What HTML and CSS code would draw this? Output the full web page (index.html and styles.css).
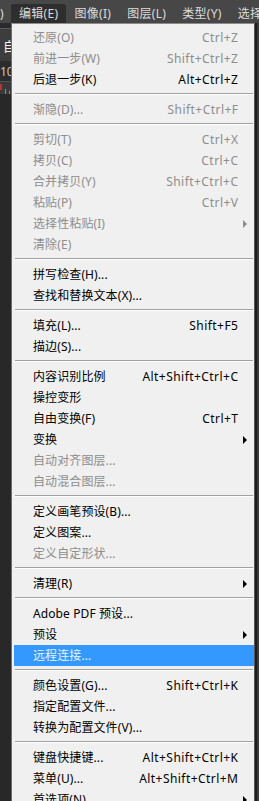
FILE: index.html
```html
<!DOCTYPE html>
<html lang="zh-CN">
<head>
<meta charset="utf-8">
<title>编辑菜单</title>
<link rel="stylesheet" href="styles.css">
</head>
<body>
<div class="app">
  <div class="menubar">
    <span class="mb-item mb-cut">)</span>
    <span class="mb-item mb-active">编辑(E)</span>
    <span class="mb-item">图像(I)</span>
    <span class="mb-item">图层(L)</span>
    <span class="mb-item">类型(Y)</span>
    <span class="mb-item">选择</span>
  </div>
  <div class="main">
    <div class="left-strip">
      <div class="ls-top"></div>
      <div class="ls-line"></div>
      <div class="ls-tool"><span class="ls-char">自</span></div>
      <div class="ls-num"><span class="ls-numtext">10</span></div>
      <div class="ls-ruler"><span class="ls-red"></span><span class="ls-tick"></span><span class="ls-tick t2"></span></div>
      <div class="ls-rest"></div>
    </div>
    <div class="menu">
      <div class="item disabled"><span class="label">还原(O)</span><span class="key">Ctrl+Z</span><span class="sub"></span></div>
      <div class="item disabled"><span class="label">前进一步(W)</span><span class="key">Shift+Ctrl+Z</span><span class="sub"></span></div>
      <div class="item"><span class="label">后退一步(K)</span><span class="key">Alt+Ctrl+Z</span><span class="sub"></span></div>
      <div class="sep"></div>
      <div class="item disabled"><span class="label">渐隐(D)...</span><span class="key">Shift+Ctrl+F</span><span class="sub"></span></div>
      <div class="sep"></div>
      <div class="item disabled"><span class="label">剪切(T)</span><span class="key">Ctrl+X</span><span class="sub"></span></div>
      <div class="item disabled"><span class="label">拷贝(C)</span><span class="key">Ctrl+C</span><span class="sub"></span></div>
      <div class="item disabled"><span class="label">合并拷贝(Y)</span><span class="key">Shift+Ctrl+C</span><span class="sub"></span></div>
      <div class="item disabled"><span class="label">粘贴(P)</span><span class="key">Ctrl+V</span><span class="sub"></span></div>
      <div class="item disabled"><span class="label">选择性粘贴(I)</span><span class="key"></span><span class="sub"><i class="arrow arrow-dis"></i></span></div>
      <div class="item disabled"><span class="label">清除(E)</span><span class="key"></span><span class="sub"></span></div>
      <div class="sep"></div>
      <div class="item"><span class="label">拼写检查(H)...</span><span class="key"></span><span class="sub"></span></div>
      <div class="item"><span class="label">查找和替换文本(X)...</span><span class="key"></span><span class="sub"></span></div>
      <div class="sep"></div>
      <div class="item"><span class="label">填充(L)...</span><span class="key">Shift+F5</span><span class="sub"></span></div>
      <div class="item"><span class="label">描边(S)...</span><span class="key"></span><span class="sub"></span></div>
      <div class="sep"></div>
      <div class="item"><span class="label">内容识别比例</span><span class="key">Alt+Shift+Ctrl+C</span><span class="sub"></span></div>
      <div class="item"><span class="label">操控变形</span><span class="key"></span><span class="sub"></span></div>
      <div class="item"><span class="label">自由变换(F)</span><span class="key">Ctrl+T</span><span class="sub"></span></div>
      <div class="item"><span class="label">变换</span><span class="key"></span><span class="sub"><i class="arrow"></i></span></div>
      <div class="item disabled"><span class="label">自动对齐图层...</span><span class="key"></span><span class="sub"></span></div>
      <div class="item disabled"><span class="label">自动混合图层...</span><span class="key"></span><span class="sub"></span></div>
      <div class="sep"></div>
      <div class="item"><span class="label">定义画笔预设(B)...</span><span class="key"></span><span class="sub"></span></div>
      <div class="item"><span class="label">定义图案...</span><span class="key"></span><span class="sub"></span></div>
      <div class="item disabled"><span class="label">定义自定形状...</span><span class="key"></span><span class="sub"></span></div>
      <div class="sep"></div>
      <div class="item"><span class="label">清理(R)</span><span class="key"></span><span class="sub"><i class="arrow"></i></span></div>
      <div class="sep"></div>
      <div class="item"><span class="label">Adobe PDF 预设...</span><span class="key"></span><span class="sub"></span></div>
      <div class="item"><span class="label">预设</span><span class="key"></span><span class="sub"><i class="arrow"></i></span></div>
      <div class="item active"><span class="label">远程连接...</span><span class="key"></span><span class="sub"></span></div>
      <div class="sep"></div>
      <div class="item"><span class="label">颜色设置(G)...</span><span class="key">Shift+Ctrl+K</span><span class="sub"></span></div>
      <div class="item"><span class="label">指定配置文件...</span><span class="key"></span><span class="sub"></span></div>
      <div class="item"><span class="label">转换为配置文件(V)...</span><span class="key"></span><span class="sub"></span></div>
      <div class="sep"></div>
      <div class="item"><span class="label">键盘快捷键...</span><span class="key">Alt+Shift+Ctrl+K</span><span class="sub"></span></div>
      <div class="item"><span class="label">菜单(U)...</span><span class="key">Alt+Shift+Ctrl+M</span><span class="sub"></span></div>
      <div class="item"><span class="label">首选项(N)</span><span class="key"></span><span class="sub"><i class="arrow"></i></span></div>
    </div>
    <div class="right-strip"></div>
  </div>
</div>
</body>
</html>
```

FILE: styles.css
```css
html, body {
  margin: 0;
  padding: 0;
  background: #2a2a2a;
  overflow: hidden;
}

body {
  width: 259px;
  height: 801px;
  font-family: "Noto Sans", "Noto Sans CJK SC", sans-serif;
  font-size: 12px;
}

.app {
  display: flex;
  flex-direction: column;
  height: 801px;
  overflow: hidden;
}

/* ---------- menubar ---------- */
.menubar {
  display: flex;
  align-items: flex-start;
  height: 23px;
  flex: 0 0 23px;
  padding-top: 4px;
  box-sizing: border-box;
  background: #474747;
  white-space: nowrap;
  overflow: hidden;
}

.mb-item {
  flex: 0 0 auto;
  display: flex;
  align-items: center;
  height: 19px;
  padding: 0 8px 0 8px;
  color: #dcdcdc;
  line-height: 19px;
  letter-spacing: 0.3px;
  box-sizing: border-box;
}

.mb-cut {
  padding: 0;
  width: 11px;
}

.mb-active {
  background: #2e2e2e;
  border-radius: 2px 2px 0 0;
}

/* ---------- main area ---------- */
.main {
  display: flex;
  flex: 1 1 auto;
  min-height: 0;
}

.left-strip {
  width: 11px;
  flex: 0 0 11px;
  display: flex;
  flex-direction: column;
  overflow: hidden;
  background: #2a2a2a;
}

.ls-top {
  height: 5px;
  background: #2b2b2b;
}

.ls-line {
  height: 1px;
  background: #5a5a5a;
}

.ls-tool {
  height: 32px;
  background: #3d3d3d;
  color: #f2f2f2;
  display: flex;
  align-items: center;
  padding-left: 3px;
  white-space: nowrap;
}

.ls-char {
  font-size: 13px;
}

.ls-num {
  height: 20px;
  background: #2c2c2c;
  color: #c8c8c8;
  display: flex;
  align-items: center;
  white-space: nowrap;
}

.ls-numtext {
  font-size: 12px;
}

.ls-ruler {
  height: 12px;
  background: #393939;
  border-top: 1px solid #505050;
  display: flex;
  align-items: flex-end;
  gap: 3px;
}

.ls-red {
  width: 2px;
  height: 6px;
  background: #c03030;
  align-self: flex-start;
  margin-top: 2px;
}

.ls-tick {
  width: 1px;
  height: 5px;
  background: #8a8a8a;
}

.ls-tick.t2 {
  height: 3px;
}

.ls-rest {
  flex: 1;
  background: #282828;
}

.right-strip {
  flex: 1 1 auto;
  background: #1c1c1c;
  border-right: 2px solid #3a3a3a;
}

/* ---------- menu ---------- */
.menu {
  width: 242px;
  flex: 0 0 242px;
  background: #f0f0f0;
  border-left: 1px solid #6e6e6e;
  border-right: 1px solid #5a5a5a;
  border-top: 1px solid #8c8c8c;
  padding-top: 3px;
  box-sizing: content-box;
}

.item {
  display: grid;
  grid-template-columns: 1fr auto 16px;
  align-items: center;
  height: 21px;
  padding-left: 21px;
  margin-left: 2px;
  color: #000;
  white-space: nowrap;
  line-height: 21px;
}

.item .label {
  margin-left: -2px;
  letter-spacing: 0.1px;
}

.item.disabled {
  color: #8d8d8d;
}

.item.active {
  background: #3399ff;
  color: #e8f2ff;
}

.key {
  text-align: right;
  letter-spacing: 0.45px;
  margin-right: -0.45px;
}

.sub {
  display: flex;
  align-items: center;
  height: 21px;
}

.arrow {
  display: block;
  width: 0;
  height: 0;
  margin-left: 5px;
  border-left: 4px solid #000;
  border-top: 4px solid transparent;
  border-bottom: 4px solid transparent;
}

.arrow-dis {
  border-left-color: #8d8d8d;
}

.sep {
  height: 9px;
  box-sizing: border-box;
  padding-top: 3px;
  margin: 0 1px 0 3px;
}

.sep::before {
  content: "";
  display: block;
  height: 1px;
  background: #a0a0a0;
  border-bottom: 1px solid #ffffff;
}
```
